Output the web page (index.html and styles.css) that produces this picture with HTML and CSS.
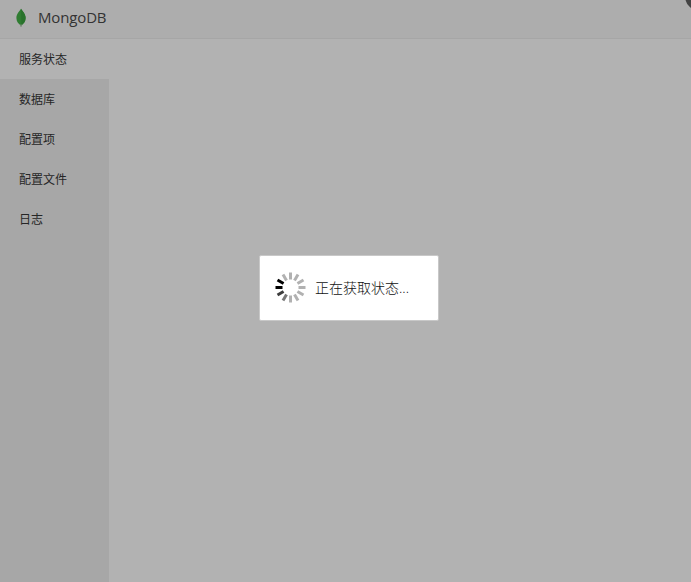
FILE: index.html
```html
<!DOCTYPE html>
<html lang="zh-CN">
<head>
<meta charset="utf-8">
<title>MongoDB</title>
<link rel="stylesheet" href="styles.css">
</head>
<body>
<div class="window">
  <header class="header">
    <svg class="leaf" width="12" height="20" viewBox="0 0 12 20" aria-hidden="true">
      <path d="M6 .8C7.200 3 10.600 5.500 10.600 10c0 3.500-2.100 5.800-4.100 7.200L6 19l-.5-1.800C3.500 15.800 1.400 13.500 1.400 10 1.400 5.500 4.800 3 6 .8Z" fill="#2f7c31"/>
      <path d="M6 .8C7.200 3 10.600 5.500 10.600 10c0 3.500-2.100 5.800-4.100 7.200Z" fill="#29722c"/>
      <path d="M6 16v3" stroke="#81877e" stroke-width=".8"/>
    </svg>
    <h1 class="title">MongoDB</h1>
  </header>
  <div class="body">
    <nav class="sidebar">
      <a class="item active">服务状态</a>
      <a class="item">数据库</a>
      <a class="item">配置项</a>
      <a class="item">配置文件</a>
      <a class="item">日志</a>
    </nav>
    <main class="content"></main>
  </div>
  <span class="close"></span>
</div>
<div class="dialog" role="status">
  <svg class="spinner" width="32" height="32" viewBox="-16.500 -15.500 32 32" aria-hidden="true">
    <g stroke="#b1b1b1" stroke-width="3">
      <path d="M0-8V-15"/>
      <path d="M0-8V-15" transform="rotate(30)"/>
      <path d="M0-8V-15" transform="rotate(60)"/>
      <path d="M0-8V-15" transform="rotate(90)"/>
      <path d="M0-8V-15" transform="rotate(120)"/>
      <path d="M0-8V-15" transform="rotate(150)"/>
      <path d="M0-8V-15" transform="rotate(180)"/>
      <path d="M0-8V-15" transform="rotate(210)" stroke="#777"/>
      <path d="M0-8V-15" transform="rotate(240)" stroke="#3c3c3c"/>
      <path d="M0-8V-15" transform="rotate(270)" stroke="#000"/>
      <path d="M0-8V-15" transform="rotate(300)" stroke="#000"/>
      <path d="M0-8V-15" transform="rotate(330)"/>
    </g>
  </svg>
  <span class="message">正在获取状态...</span>
</div>
</body>
</html>
```
FILE: styles.css
```css
* {
  box-sizing: border-box;
}

body {
  margin: 0;
  height: 100vh;
  overflow: hidden;
  font-family: "Open Sans", "Noto Sans CJK SC", sans-serif;
  color: #262626;
}

.window {
  position: relative;
  display: flex;
  flex-direction: column;
  height: 100%;
  overflow: hidden;
  background: #b2b2b2;
}

.header {
  display: flex;
  align-items: center;
  height: 39px;
  padding: 0 15px 3px;
  background: #adadad;
  border-bottom: 1px solid #a6a6a6;
}

.leaf {
  margin: 0 11px 0 0;
}

.title {
  margin: 0 0 2px;
  font-size: 15px;
  font-weight: 400;
  letter-spacing: -0.15px;
  line-height: 20px;
  color: #333;
}

.body {
  display: flex;
  flex: 1;
}

.sidebar {
  width: 109px;
  background: #a7a7a7;
}

.item {
  display: block;
  height: 40px;
  padding-left: 19px;
  font-size: 12px;
  line-height: 42px;
}

.item.active {
  background: #b2b2b2;
}

.content {
  flex: 1;
}

.close {
  position: absolute;
  top: -19px;
  right: -24px;
  width: 30px;
  height: 30px;
  border-radius: 50%;
  background: #444;
}

.dialog {
  position: absolute;
  top: 255px;
  left: 259px;
  display: flex;
  align-items: center;
  gap: 9px;
  width: 180px;
  height: 66px;
  padding-left: 14px;
  background: #fff;
  border: 1px solid #c8c8c8;
  border-radius: 2px;
}

.message {
  font-size: 14px;
  font-weight: 300;
  line-height: 20px;
  color: #111;
}
```
